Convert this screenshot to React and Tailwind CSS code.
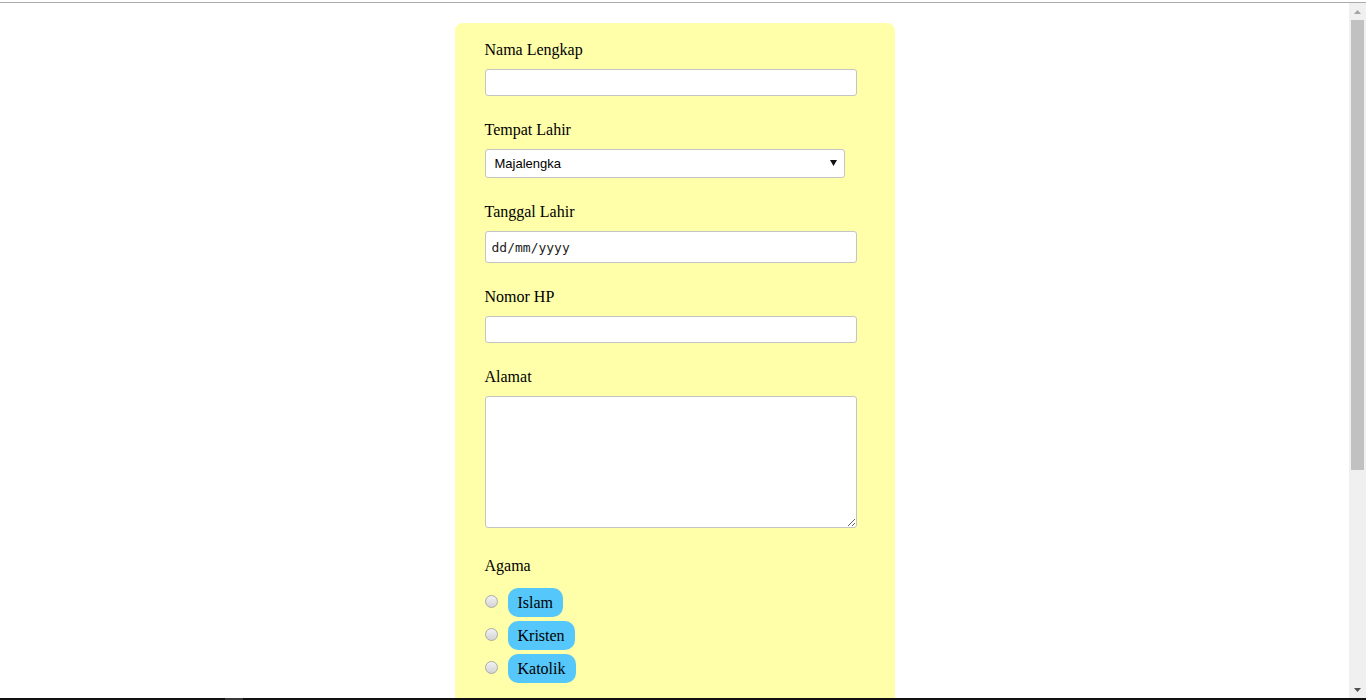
import { useState } from 'react';

const agamaList = ['Islam', 'Kristen', 'Katolik'];

function Label({ children, className = '' }) {
  return <label className={`block text-[16px] leading-[18px] text-black ${className}`}>{children}</label>;
}

function Pill({ name, value, checked, onChange }) {
  return (
    <label className="flex items-center cursor-pointer">
      <input type="radio" name={name} value={value} checked={checked} onChange={onChange} className="sr-only" />
      <span className="w-[13px] h-[13px] rounded-full border border-[#a9a9a9] bg-gradient-to-b from-[#f2f2f2] to-[#d4d4d4] mr-[10px] mt-[-3px] shrink-0" />
      <span className="h-[29px] flex items-center px-[10px] rounded-[10px] bg-[#55c7fa] text-[16px] text-black">{value}</span>
    </label>
  );
}

function Scrollbar() {
  return (
    <div className="w-[17px] shrink-0 bg-[#f0f0f0] flex flex-col items-center">
      <div className="h-[17px] flex items-center justify-center">
        <svg width="7" height="4" viewBox="0 0 7 4"><path d="M3.5 0L7 4H0z" fill="#a3a3a3" /></svg>
      </div>
      <div className="w-[13px] h-[450px] bg-[#c1c1c1]" />
      <div className="flex-1" />
      <div className="h-[17px] flex items-center justify-center">
        <svg width="7" height="4" viewBox="0 0 7 4"><path d="M0 0h7L3.5 4z" fill="#505050" /></svg>
      </div>
    </div>
  );
}

export default function App() {
  const [agama, setAgama] = useState('');

  return (
    <div className="h-[700px] flex flex-col bg-white overflow-hidden" style={{ fontFamily: '"Liberation Serif", serif' }}>
      <div className="h-[2px] bg-white shrink-0" />
      <div className="h-px bg-[#ababab] shrink-0" />
      <div className="flex-1 min-h-0 flex">
        <div className="flex-1 min-w-0 overflow-hidden">
          <form className="w-[440px] mx-auto mt-[20px] bg-[#ffffaa] rounded-[8px] pt-[18px] pb-[120px] pl-[30px] pr-[38px]">
            <Label>Nama Lengkap</Label>
            <input type="text" className="block mt-[10px] w-[372px] h-[27px] bg-white border border-[#c4c4c4] rounded-[3px] px-[4px] text-[13px] outline-none" />

            <Label className="mt-[25px]">Tempat Lahir</Label>
            <div className="relative mt-[10px] w-[360px]">
              <select defaultValue="Majalengka" className="block appearance-none w-[360px] h-[29px] bg-white border border-[#c4c4c4] rounded-[3px] pl-[9px] text-[13px] text-black outline-none" style={{ fontFamily: '"Liberation Sans", Arial, sans-serif' }}>
                <option>Majalengka</option>
                <option>Cirebon</option>
                <option>Kuningan</option>
                <option>Indramayu</option>
              </select>
              <svg className="absolute right-[8px] top-[11px] pointer-events-none" width="7" height="6" viewBox="0 0 7 6">
                <path d="M0 0h7L3.5 6z" fill="#111" />
              </svg>
            </div>

            <Label className="mt-[25px]">Tanggal Lahir</Label>
            <input type="text" readOnly value="dd/mm/yyyy" className="block mt-[10px] w-[372px] h-[32px] bg-white border border-[#c4c4c4] rounded-[3px] pl-[6px] text-[13px] text-[#222] outline-none" style={{ fontFamily: '"DejaVu Sans Mono", monospace' }} />

            <Label className="mt-[25px]">Nomor HP</Label>
            <input type="text" className="block mt-[10px] w-[372px] h-[27px] bg-white border border-[#c4c4c4] rounded-[3px] px-[4px] text-[13px] outline-none" />

            <Label className="mt-[25px]">Alamat</Label>
            <textarea className="block mt-[10px] w-[372px] h-[132px] bg-white border border-[#c4c4c4] rounded-[3px] p-[4px] text-[13px] outline-none" />

            <Label className="mt-[29px]">Agama</Label>
            <div className="mt-[13px] flex flex-col gap-[4px] items-start">
              {agamaList.map((a) => (
                <Pill key={a} name="agama" value={a} checked={agama === a} onChange={() => setAgama(a)} />
              ))}
            </div>
          </form>
        </div>
        <Scrollbar />
      </div>
      <div className="h-[2px] bg-[#121212] shrink-0 flex">
        <div className="ml-[225px] w-[18px] bg-[#3a3a3a]" />
      </div>
    </div>
  );
}
